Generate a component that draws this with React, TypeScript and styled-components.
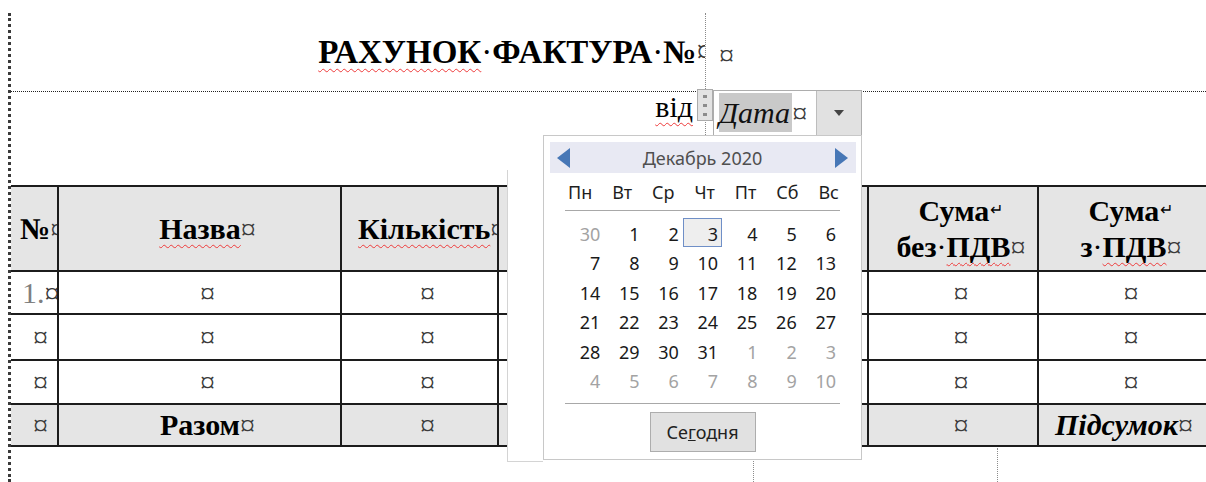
import React from "react";
import styled, { createGlobalStyle } from "styled-components";

const serif = `"Liberation Serif", "Times New Roman", serif`;
const ui = `"Noto Sans", "Open Sans", sans-serif`;

const GlobalStyle = createGlobalStyle`
  html, body {
    margin: 0;
    padding: 0;
    background: #fff;
  }
  body {
    width: 1206px;
    height: 482px;
    overflow: hidden;
  }
`;

const Page = styled.div`
  position: relative;
  width: 1206px;
  height: 482px;
  overflow: hidden;
  box-sizing: border-box;
  padding: 13px 0 0 8px;
  font-family: ${serif};
  color: #000;
`;

const Sheet = styled.div`
  height: 100%;
  border-left: 3px dotted #3a3a3a;
  display: flex;
  flex-direction: column;
`;

/* document text helpers */

const Squiggle = styled.span`
  text-decoration-line: underline;
  text-decoration-style: wavy;
  text-decoration-color: #ee3a3a;
  text-decoration-thickness: 1px;
  text-underline-offset: 5px;
  text-decoration-skip-ink: none;
`;

const Mark = styled.span`
  font-weight: 400;
  font-style: normal;
  color: #3a3a3a;
`;

const Dot = styled.span`
  font-weight: 400;
`;

const Break = styled.span`
  font-size: 16px;
  font-weight: 400;
  vertical-align: 6px;
  margin-left: 1px;
`;

/* heading rows */

const TitleRow = styled.div`
  display: flex;
  flex-shrink: 0;
  height: 79px;
  box-sizing: border-box;
  border-bottom: 1px dotted #222;
`;

const TitleCell = styled.div`
  width: 695px;
  box-sizing: border-box;
  border-right: 1px dotted #8a8a8a;
  overflow: hidden;
  display: flex;
  align-items: center;
  justify-content: flex-end;
  font-size: 33px;
  line-height: 36px;
  font-weight: 700;
`;

const Title = styled.span`
  margin-right: -8px;
  white-space: nowrap;
`;

const RowEnd = styled.div`
  display: flex;
  align-items: center;
  padding-left: 13px;
  font-size: 30px;
  line-height: 36px;
  padding-top: 6px;
`;

const DateRow = styled.div`
  display: flex;
  flex-shrink: 0;
  height: 93px;
`;

const LabelCell = styled.div`
  width: 695px;
  box-sizing: border-box;
  border-right: 1px dotted #8a8a8a;
  text-align: right;
  padding-right: 12px;
  font-size: 30px;
  line-height: 30px;
`;

const Control = styled.div`
  position: relative;
  z-index: 1;
  display: flex;
  align-items: flex-start;
  align-self: flex-start;
  margin: -3px 0 0 -9px;
`;

const Handle = styled.div`
  width: 16px;
  height: 32px;
  box-sizing: border-box;
  border: 1px solid #ababab;
  background: #e3e3e3;
  display: flex;
  flex-direction: column;
  align-items: center;
  justify-content: center;
  gap: 6px;
`;

const Grip = styled.i`
  display: block;
  width: 4px;
  height: 3px;
  background: #8c8c8c;
`;

const Field = styled.div`
  display: flex;
  width: 149px;
  height: 46px;
  box-sizing: border-box;
  margin-top: 1px;
  border: 1px solid #adadad;
  background: #fff;
`;

const FieldText = styled.div`
  flex: 1;
  padding: 5px 0 0 5px;
  font-size: 30px;
  line-height: 33px;
  font-style: italic;
  white-space: nowrap;
`;

const Placeholder = styled.span`
  background: #c9c9c9;
  padding: 3px 2px 3px 0;
  color: #111;
`;

const DropButton = styled.div`
  width: 44px;
  border-left: 1px solid #bdbdbd;
  background: #e1e1e1;
  display: flex;
  align-items: center;
  justify-content: center;

  &::after {
    content: "";
    border-top: 6px solid #444;
    border-left: 5px solid transparent;
    border-right: 5px solid transparent;
  }
`;

/* invoice table */

const Invoice = styled.table`
  width: 1197px;
  flex-shrink: 0;
  table-layout: fixed;
  border-collapse: collapse;
  font-size: 30px;
  line-height: 36px;
`;

const Row = styled.tr<{ $h: number; $shade?: boolean }>`
  height: ${(p) => p.$h}px;
  background: ${(p) => (p.$shade ? "#e5e5e5" : "#fff")};
`;

const Cell = styled.td<{ $pad?: number; $left?: boolean; $tone?: "bold" | "boldItalic" }>`
  border: 2px solid #1c1c1c;
  padding: 0 0 0 ${(p) => p.$pad ?? 16}px;
  text-align: ${(p) => (p.$left ? "left" : "center")};
  vertical-align: middle;
  white-space: nowrap;
  overflow: hidden;
  font-weight: ${(p) => (p.$tone ? 700 : 400)};
  font-style: ${(p) => (p.$tone === "boldItalic" ? "italic" : "normal")};

  &:first-child {
    border-left: none;
  }
`;

const ListNo = styled.span`
  color: #7f7f7f;
`;

/* empty layout grid under the table */

const FooterRow = styled.div`
  flex: 1;
  display: flex;
  margin-top: 1px;
`;

const FooterCell = styled.div<{ $w: number }>`
  width: ${(p) => p.$w}px;
  box-sizing: border-box;
  border-right: 1px dotted #8c8c8c;
`;

/* date picker dropdown */

const Popup = styled.div`
  position: absolute;
  left: 507px;
  top: 135px;
  z-index: 2;
  display: flex;
  align-items: flex-start;
  font-family: ${ui};
`;

const PopupEdge = styled.div`
  width: 36px;
  height: 292px;
  margin-top: 35px;
  box-sizing: border-box;
  background: #fff;
  border-left: 1px solid #d4d4d4;
  border-bottom: 1px solid #d4d4d4;
`;

const Panel = styled.div`
  width: 319px;
  height: 325px;
  box-sizing: border-box;
  border: 1px solid #c8c8c8;
  background: #fff;
  padding: 6px 5px 0 6px;
`;

const MonthBar = styled.div`
  height: 31px;
  display: flex;
  align-items: center;
  justify-content: space-between;
  padding: 0 8px 0 7px;
  background: #e8e9f3;
`;

const Arrow = styled.button<{ $dir: "prev" | "next" }>`
  width: 0;
  height: 0;
  padding: 0;
  background: none;
  border-top: 10px solid transparent;
  border-bottom: 10px solid transparent;
  border-left: ${(p) => (p.$dir === "next" ? "13px solid #4777b6" : "none")};
  border-right: ${(p) => (p.$dir === "prev" ? "13px solid #4777b6" : "none")};
  cursor: pointer;
`;

const MonthLabel = styled.span`
  font-size: 18px;
  color: #4f4f4f;
`;

const CalBody = styled.div`
  margin: 0 16px 0 15px;
`;

const WeekRow = styled.div`
  height: 37px;
  display: flex;
  align-items: center;
  justify-content: space-between;
  padding: 0 1px 0 3px;
  border-bottom: 1px solid #a8a8a8;
  font-size: 18px;
  color: #1e1e1e;
`;

const Days = styled.div`
  display: grid;
  grid-template-columns: repeat(7, 1fr);
  grid-auto-rows: 29.4px;
  margin-top: 7px;
`;

const Day = styled.div<{ $muted?: boolean; $current?: boolean }>`
  box-sizing: border-box;
  text-align: right;
  padding-right: 3px;
  font-size: 18px;
  line-height: 31px;
  color: ${(p) => (p.$muted ? "#a3a3a3" : "#1a1a1a")};
  border: 1px solid ${(p) => (p.$current ? "#6f8fc7" : "transparent")};
  background: ${(p) => (p.$current ? "#eeeeee" : "transparent")};
`;

const CalFooter = styled.div`
  margin-top: 9px;
  border-top: 1px solid #a8a8a8;
  display: flex;
  justify-content: center;
  padding-top: 8px;
`;

const TodayButton = styled.button`
  width: 106px;
  height: 40px;
  background: #e1e1e1;
  border: 1px solid #adadad;
  font-family: ${ui};
  font-size: 18px;
  color: #222;
  padding: 0;
`;

const columns = [47, 283, 157, 185, 185, 170, 170];

// the two middle columns sit under the open calendar
const covered = [3, 4];

const weekdays = ["Пн", "Вт", "Ср", "Чт", "Пт", "Сб", "Вс"];

// December 2020 starts on Tuesday; pad with the neighbouring months
const days = [
  { d: 30, muted: true },
  ...Array.from({ length: 31 }, (_, i) => ({ d: i + 1, muted: false })),
  ...Array.from({ length: 10 }, (_, i) => ({ d: i + 1, muted: true })),
];

const rows = [
  { h: 43, first: <><ListNo>1.</ListNo><Mark>¤</Mark></> },
  { h: 46, first: <Mark>¤</Mark> },
  { h: 44, first: <Mark>¤</Mark> },
];

const App: React.FC = () => {
  return (
    <Page>
      <GlobalStyle />
      <Sheet>
        <TitleRow>
          <TitleCell>
            <Title>
              <Squiggle>РАХУНОК</Squiggle>
              <Dot>·</Dot>ФАКТУРА<Dot>·</Dot>№<Mark>¤</Mark>
            </Title>
          </TitleCell>
          <RowEnd>
            <Mark>¤</Mark>
          </RowEnd>
        </TitleRow>

        <DateRow>
          <LabelCell>
            <Squiggle>від</Squiggle>
          </LabelCell>
          <Control>
            <Handle>
              <Grip />
              <Grip />
              <Grip />
            </Handle>
            <Field>
              <FieldText>
                <Placeholder>Дата</Placeholder>
                <Mark>¤</Mark>
              </FieldText>
              <DropButton />
            </Field>
          </Control>
        </DateRow>

        <Invoice>
          <colgroup>
            {columns.map((w, i) => (
              <col key={i} style={{ width: w }} />
            ))}
          </colgroup>
          <tbody>
            <Row $h={85} $shade>
              <Cell $left $pad={9} $tone="bold">
                №<Mark>¤</Mark>
              </Cell>
              <Cell $tone="bold">
                <Squiggle>Назва</Squiggle>
                <Mark>¤</Mark>
              </Cell>
              <Cell $left $tone="bold">
                <Squiggle>Кількість</Squiggle>
                <Mark>¤</Mark>
              </Cell>
              <Cell />
              <Cell />
              <Cell $tone="bold">
                Сума<Break>↵</Break>
                <br />
                без<Dot>·</Dot>
                <Squiggle>ПДВ</Squiggle>
                <Mark>¤</Mark>
              </Cell>
              <Cell $tone="bold">
                Сума<Break>↵</Break>
                <br />з<Dot>·</Dot>
                <Squiggle>ПДВ</Squiggle>
                <Mark>¤</Mark>
              </Cell>
            </Row>
            {rows.map((r, i) => (
              <Row key={i} $h={r.h}>
                <Cell $left $pad={i === 0 ? 11 : 22}>
                  {r.first}
                </Cell>
                {columns.slice(1).map((_, j) => (
                  <Cell key={j}>{covered.includes(j + 1) ? null : <Mark>¤</Mark>}</Cell>
                ))}
              </Row>
            ))}
            <Row $h={42} $shade>
              <Cell $left $pad={22}>
                <Mark>¤</Mark>
              </Cell>
              <Cell $tone="bold">
                Разом<Mark>¤</Mark>
              </Cell>
              <Cell>
                <Mark>¤</Mark>
              </Cell>
              <Cell />
              <Cell />
              <Cell>
                <Mark>¤</Mark>
              </Cell>
              <Cell $left $tone="boldItalic">
                Підсумок<Mark>¤</Mark>
              </Cell>
            </Row>
          </tbody>
        </Invoice>

        <FooterRow>
          <FooterCell $w={743} />
          <FooterCell $w={244} />
        </FooterRow>
      </Sheet>

      <Popup>
        <PopupEdge />
        <Panel>
          <MonthBar>
            <Arrow $dir="prev" aria-label="prev" />
            <MonthLabel>Декабрь 2020</MonthLabel>
            <Arrow $dir="next" aria-label="next" />
          </MonthBar>
          <CalBody>
            <WeekRow>
              {weekdays.map((w) => (
                <span key={w}>{w}</span>
              ))}
            </WeekRow>
            <Days>
              {days.map((day, i) => (
                <Day key={i} $muted={day.muted} $current={!day.muted && day.d === 3}>
                  {day.d}
                </Day>
              ))}
            </Days>
            <CalFooter>
              <TodayButton>
                Се<u>г</u>одня
              </TodayButton>
            </CalFooter>
          </CalBody>
        </Panel>
      </Popup>
    </Page>
  );
};

export default App;
